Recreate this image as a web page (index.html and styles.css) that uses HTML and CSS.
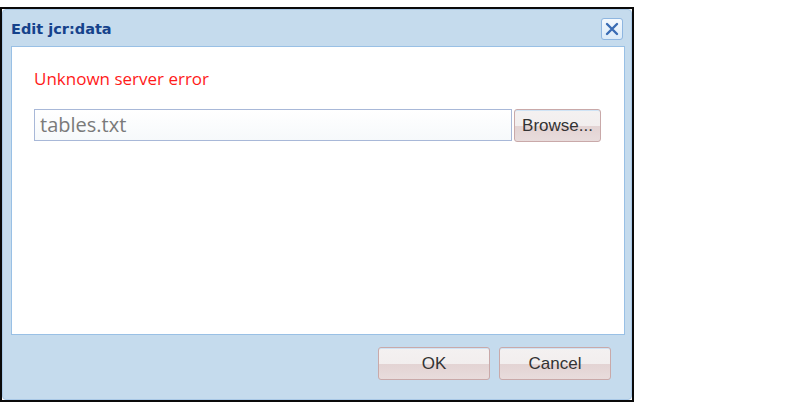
FILE: index.html
```html
<!DOCTYPE html>
<html>
<head>
<meta charset="utf-8">
<link rel="stylesheet" href="styles.css">
</head>
<body>
<div class="frame">
  <div class="dialog">
    <div class="titlebar">
      <span class="title">Edit jcr:data</span>
      <button class="close" aria-label="Close">
        <svg width="14" height="14" viewBox="0 0 14 14"><path d="M2 2 L12 12 M12 2 L2 12" stroke="#3a6cb4" stroke-width="2.4" stroke-linecap="round"/></svg>
      </button>
    </div>
    <div class="panel">
      <div class="error">Unknown server error</div>
      <div class="filerow">
        <div class="field">tables.txt</div>
        <button class="btn browse">Browse...</button>
      </div>
    </div>
    <div class="footer">
      <button class="btn action">OK</button>
      <button class="btn action">Cancel</button>
    </div>
  </div>
</div>
</body>
</html>
```
FILE: styles.css
```css
html, body { margin: 0; padding: 0; background: #fff; }
body { padding-top: 7px; }
.frame {
  width: 630px;
  height: 391px;
  border: 2px solid #0a0a0a;
}
.dialog {
  box-sizing: border-box;
  height: 100%;
  border: 1px solid #a9c8e6;
  border-radius: 4px;
  background: #c5dbed;
  display: flex;
  flex-direction: column;
  padding: 0 6px 0 8px;
}
.titlebar {
  height: 36px;
  display: flex;
  align-items: center;
  justify-content: space-between;
  flex: none;
}
.title {
  font-family: "DejaVu Sans", Verdana, sans-serif;
  font-weight: bold;
  font-size: 14.5px;
  color: #15428b;
  padding-top: 2px;
}
.close {
  width: 22px;
  height: 22px;
  margin-right: 2px;
  margin-top: 2px;
  padding: 0;
  border: 1px solid #8fb6e0;
  border-radius: 3px;
  background: linear-gradient(#f4f9fe, #dcebf8);
  display: flex;
  align-items: center;
  justify-content: center;
}
.panel {
  flex: 1;
  background: #fff;
  border: 1px solid #99c0e5;
  padding: 20px 22px 0 22px;
}
.error {
  font-family: "Open Sans", sans-serif;
  font-size: 17px;
  color: #ff1a1a;
  line-height: 24px;
}
.filerow {
  display: flex;
  margin-top: 18px;
  gap: 2px;
}
.field {
  box-sizing: border-box;
  width: 478px;
  height: 32px;
  border: 1px solid #a8b8d8;
  background: linear-gradient(#ffffff, #f6f9fb);
  font-family: "Open Sans", sans-serif;
  font-size: 20px;
  color: #7a7a7a;
  line-height: 29px;
  padding-left: 5px;
}
.btn {
  box-sizing: border-box;
  border: 1px solid #c9a9a9;
  border-radius: 3px;
  background: linear-gradient(#f4f1f1 0%, #f2eeee 50%, #e3d3d3 52%, #e8dcdc 100%);
  box-shadow: inset 0 1px 0 #cfe3f5;
  font-family: "Liberation Sans", Arial, sans-serif;
  font-size: 17px;
  color: #333;
  padding: 0;
}
.browse {
  width: 87px;
  height: 33px;
}
.footer {
  height: 64px;
  flex: none;
  display: flex;
  justify-content: flex-end;
  align-items: flex-start;
  gap: 9px;
  padding: 12px 14px 0 0;
  box-sizing: border-box;
}
.action {
  width: 112px;
  height: 33px;
}
```
